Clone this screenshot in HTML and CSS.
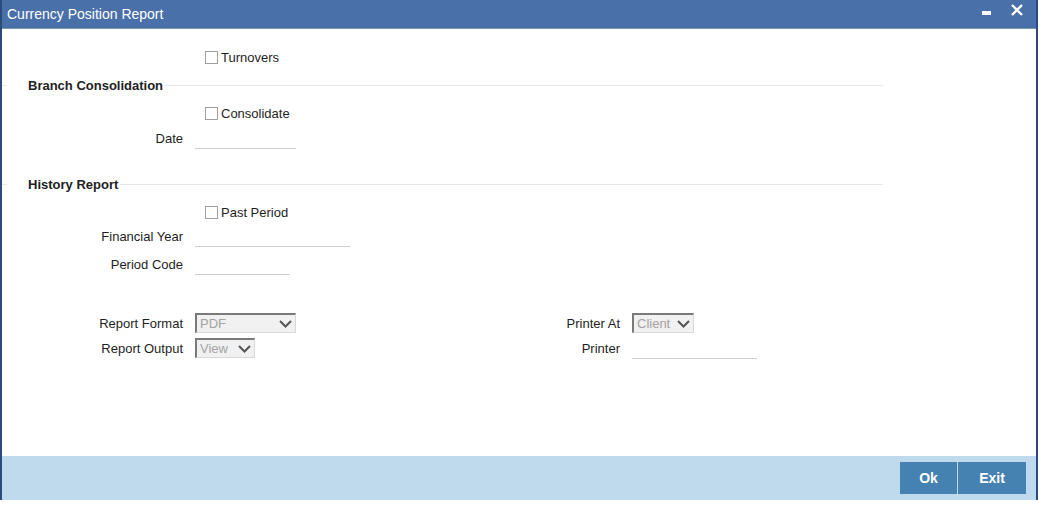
FILE: index.html
```html
<!DOCTYPE html>
<html>
<head>
<meta charset="utf-8">
<link rel="stylesheet" href="styles.css">
</head>
<body>
<div class="window">
  <div class="titlebar">
    <span class="title">Currency Position Report</span>
    <div class="controls">
      <span class="min"></span>
      <svg class="close" width="12" height="12" viewBox="0 0 12 12"><path d="M1 1 L11 11 M11 1 L1 11" stroke="#fff" stroke-width="2.4" fill="none"/></svg>
    </div>
  </div>
  <div class="main">
    <div class="row mt16"><span class="label"></span><span class="check"><span class="box"></span>Turnovers</span></div>
    <div class="section mt4"><span class="lead"></span><span class="stitle">Branch Consolidation</span><span class="rule"></span></div>
    <div class="row mt4"><span class="label"></span><span class="check"><span class="box"></span>Consolidate</span></div>
    <div class="row mt1"><span class="label">Date</span><span class="input w101"></span></div>
    <div class="section mt22"><span class="lead"></span><span class="stitle">History Report</span><span class="rule"></span></div>
    <div class="row mt4"><span class="label"></span><span class="check"><span class="box"></span>Past Period</span></div>
    <div class="row"><span class="label">Financial Year</span><span class="input w155"></span></div>
    <div class="row mt4"><span class="label">Period Code</span><span class="input w95"></span></div>
    <div class="grid">
      <span class="glabel">Report Format</span>
      <span class="cell"><span class="select w101s"><span class="stext">PDF</span><svg class="chev" width="13" height="8" viewBox="0 0 13 8"><path d="M1 1 L6.5 6.5 L12 1" stroke="#555" stroke-width="2" fill="none"/></svg></span></span>
      <span class="glabel">Printer At</span>
      <span class="cell"><span class="select w62s"><span class="stext">Client</span><svg class="chev" width="13" height="8" viewBox="0 0 13 8"><path d="M1 1 L6.5 6.5 L12 1" stroke="#555" stroke-width="2" fill="none"/></svg></span></span>
      <span class="glabel">Report Output</span>
      <span class="cell"><span class="select w60s"><span class="stext">View</span><svg class="chev" width="13" height="8" viewBox="0 0 13 8"><path d="M1 1 L6.5 6.5 L12 1" stroke="#555" stroke-width="2" fill="none"/></svg></span></span>
      <span class="glabel">Printer</span>
      <span class="cell"><span class="input w125"></span></span>
    </div>
  </div>
  <div class="footer">
    <button class="btn ok">Ok</button>
    <button class="btn exit">Exit</button>
  </div>
</div>
</body>
</html>
```

FILE: styles.css
```css
html, body {
  margin: 0;
  padding: 0;
  background: #fff;
}
body {
  font-family: "Liberation Sans", Arial, sans-serif;
  font-size: 13px;
  color: #1e1e1e;
}
.window {
  width: 1038px;
  height: 500px;
  box-sizing: border-box;
  border-left: 2px solid #2b4b7d;
  border-right: 2px solid #2b4b7d;
  display: flex;
  flex-direction: column;
}
.titlebar {
  height: 28px;
  background: #4a70a9;
  border-bottom: 1px solid #7b95a6;
  display: flex;
  align-items: center;
  justify-content: space-between;
  flex-shrink: 0;
}
.title {
  color: #fff;
  font-size: 14px;
  padding-left: 5px;
  padding-bottom: 1px;
}
.controls {
  display: flex;
  align-items: flex-start;
  height: 28px;
  padding-right: 13px;
}
.min {
  width: 9px;
  height: 4px;
  background: #fff;
  margin-top: 11px;
  margin-right: 20px;
}
.close {
  margin-top: 4px;
}
.main {
  flex: 1;
  display: flex;
  flex-direction: column;
}
.row {
  display: flex;
  align-items: center;
  height: 24px;
}
.mt1 { margin-top: 1px; }
.mt4 { margin-top: 4px; }
.mt16 { margin-top: 16px; }
.mt22 { margin-top: 22px; }
.label {
  width: 181px;
  text-align: right;
  margin-right: 12px;
  flex-shrink: 0;
}
.check {
  display: flex;
  align-items: center;
  margin-left: 10px;
}
.box {
  width: 11px;
  height: 11px;
  border: 1px solid #a0a0a0;
  background: #fff;
  margin-right: 3px;
}
.input {
  display: block;
  height: 22px;
  box-sizing: border-box;
  border-bottom: 1px solid #cfcfcf;
}
.w101 { width: 101px; }
.w155 { width: 155px; }
.w95 { width: 95px; }
.w125 { width: 125px; }
.section {
  display: flex;
  align-items: center;
  height: 24px;
  width: 881px;
}
.lead {
  width: 5px;
  height: 1px;
  background: #e8e8e8;
  margin-right: 21px;
}
.stitle {
  font-weight: bold;
  color: #222;
  margin-right: 2px;
}
.rule {
  flex: 1;
  height: 1px;
  background: #e8e8e8;
}
.grid {
  margin-top: 35px;
  display: grid;
  grid-template-columns: 181px 313px 100px auto;
  grid-auto-rows: 24px;
  column-gap: 12px;
  row-gap: 1px;
  align-items: center;
}
.glabel {
  text-align: right;
}
.cell {
  display: flex;
  align-items: center;
}
.select {
  display: flex;
  align-items: center;
  justify-content: space-between;
  height: 20px;
  box-sizing: border-box;
  border-top: 2px solid #7a7a7a;
  border-left: 2px solid #7a7a7a;
  border-right: 1px solid #d8d8d8;
  border-bottom: 1px solid #d8d8d8;
  background: #f1f1f1;
  padding-left: 3px;
  padding-right: 3px;
  color: #a3a3a3;
}
.stext {
  font-size: 13px;
}
.chev {
  margin-top: 1px;
}
.w101s { width: 101px; }
.w62s { width: 62px; }
.w60s { width: 60px; }
.footer {
  height: 44px;
  flex-shrink: 0;
  background: #bfd9ed;
  display: flex;
  align-items: center;
  justify-content: flex-end;
  padding-right: 10px;
  gap: 1px;
}
.btn {
  height: 32px;
  border: none;
  background: #4682b1;
  color: #fff;
  font-family: "Liberation Sans", Arial, sans-serif;
  font-weight: bold;
  font-size: 14px;
  padding: 0;
  margin: 0;
}
.ok { width: 57px; }
.exit { width: 68px; }
```
